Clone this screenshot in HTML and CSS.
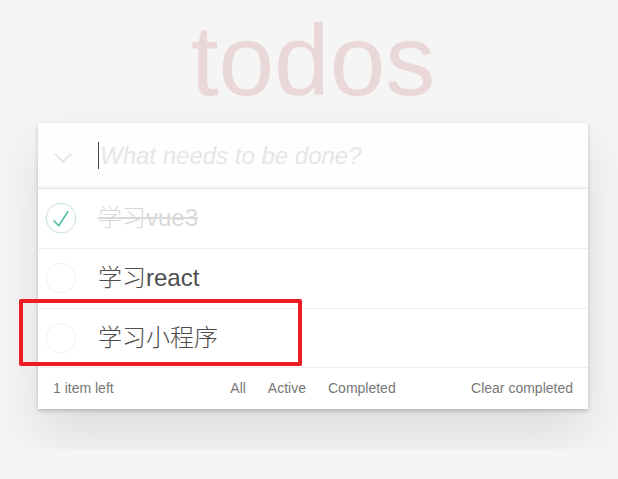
FILE: index.html
```html
<!DOCTYPE html>
<html lang="zh-CN">
<head>
<meta charset="utf-8">
<title>todos</title>
<link rel="stylesheet" href="styles.css">
</head>
<body>
<section class="todoapp">
  <h1 class="title">todos</h1>
  <div class="card">
    <header class="header">
      <span class="toggle-all">
        <svg width="20" height="12" viewBox="0 0 20 12"><polyline points="2,2 10,9.5 18,2" fill="none" stroke="#e6e6e6" stroke-width="2.2"/></svg>
      </span>
      <span class="new-todo">What needs to be done?</span>
      <span class="caret"></span>
    </header>
    <ul class="todo-list">
      <li class="todo completed">
        <svg class="check" width="40" height="40" viewBox="-10 -18 100 135"><circle cx="50" cy="50" r="50" fill="none" stroke="#bddad5" stroke-width="3"/><path fill="#5dc2af" d="M72 25L42 71 27 56l-4 4 20 20 34-52z"/></svg>
        <label class="todo-label">学习vue3</label>
      </li>
      <li class="todo">
        <svg class="check" width="40" height="40" viewBox="-10 -18 100 135"><circle cx="50" cy="50" r="50" fill="none" stroke="#ededed" stroke-width="3"/></svg>
        <label class="todo-label">学习react</label>
      </li>
      <li class="todo">
        <svg class="check" width="40" height="40" viewBox="-10 -18 100 135"><circle cx="50" cy="50" r="50" fill="none" stroke="#ededed" stroke-width="3"/></svg>
        <label class="todo-label">学习小程序</label>
      </li>
    </ul>
    <footer class="footer">
      <span class="count">1 item left</span>
      <ul class="filters">
        <li><a class="filter">All</a></li>
        <li><a class="filter">Active</a></li>
        <li><a class="filter">Completed</a></li>
      </ul>
      <span class="clear">Clear completed</span>
    </footer>
  </div>
  <div class="highlight"></div>
</section>
</body>
</html>
```

FILE: styles.css
```css
html, body {
  margin: 0;
  padding: 0;
}
body {
  background: #f5f5f5;
  color: #4d4d4d;
  font-family: "Liberation Sans", Arial, "Noto Sans CJK SC", sans-serif;
  font-size: 14px;
  line-height: 1.4em;
  font-weight: 300;
  -webkit-font-smoothing: antialiased;
}
.todoapp {
  position: relative;
  width: 550px;
  margin: 0 0 0 38px;
  padding: 10px 0 40px;
}
.title {
  margin: 0;
  text-align: center;
  font-size: 100px;
  line-height: 100px;
  font-weight: 300;
  color: rgba(175, 47, 47, 0.15);
}
.card {
  margin-top: 13px;
  background: #fff;
  box-shadow: 0 2px 4px 0 rgba(0, 0, 0, 0.2), 0 25px 50px 0 rgba(0, 0, 0, 0.1);
}
.header {
  position: relative;
  display: flex;
  align-items: center;
  height: 65px;
  background: rgba(0, 0, 0, 0.003);
  box-shadow: inset 0 -2px 1px rgba(0, 0, 0, 0.03);
  border-bottom: 1px solid #e6e6e6;
}
.toggle-all {
  display: flex;
  width: 60px;
  padding-left: 15px;
  box-sizing: border-box;
  margin-top: 4px;
}
.new-todo {
  font-size: 24px;
  font-style: italic;
  line-height: 1.4em;
  color: #e6e6e6;
  padding-left: 2px;
}
.caret {
  position: absolute;
  left: 60px;
  top: 19px;
  width: 1px;
  height: 27px;
  background: #444;
}
.todo-list {
  margin: 0;
  padding: 0;
  list-style: none;
}
.todo {
  display: flex;
  align-items: center;
  border-bottom: 1px solid #ededed;
  font-size: 24px;
}
.check {
  flex: none;
  width: 40px;
  height: 40px;
}
.todo-label {
  padding: 15px 15px 15px 20px;
  line-height: 1.2;
  color: #4d4d4d;
  word-break: break-all;
}
.completed .todo-label {
  color: #d9d9d9;
  text-decoration: line-through;
}
.footer {
  display: grid;
  grid-template-columns: 1fr auto 1fr;
  align-items: center;
  height: 20px;
  padding: 10px 15px 11px;
  color: #777;
  line-height: 20px;
}
.count {
  justify-self: start;
}
.filters {
  display: flex;
  margin: 0;
  padding: 0;
  list-style: none;
}
.filter {
  margin: 3px;
  padding: 3px 7px;
  border: 1px solid transparent;
  border-radius: 3px;
  color: inherit;
  text-decoration: none;
}
.clear {
  justify-self: end;
}
.highlight {
  position: absolute;
  left: -19px;
  top: 299px;
  width: 283px;
  height: 67px;
  box-sizing: border-box;
  border: 4px solid #ed1c24;
  border-radius: 2px;
}
```
